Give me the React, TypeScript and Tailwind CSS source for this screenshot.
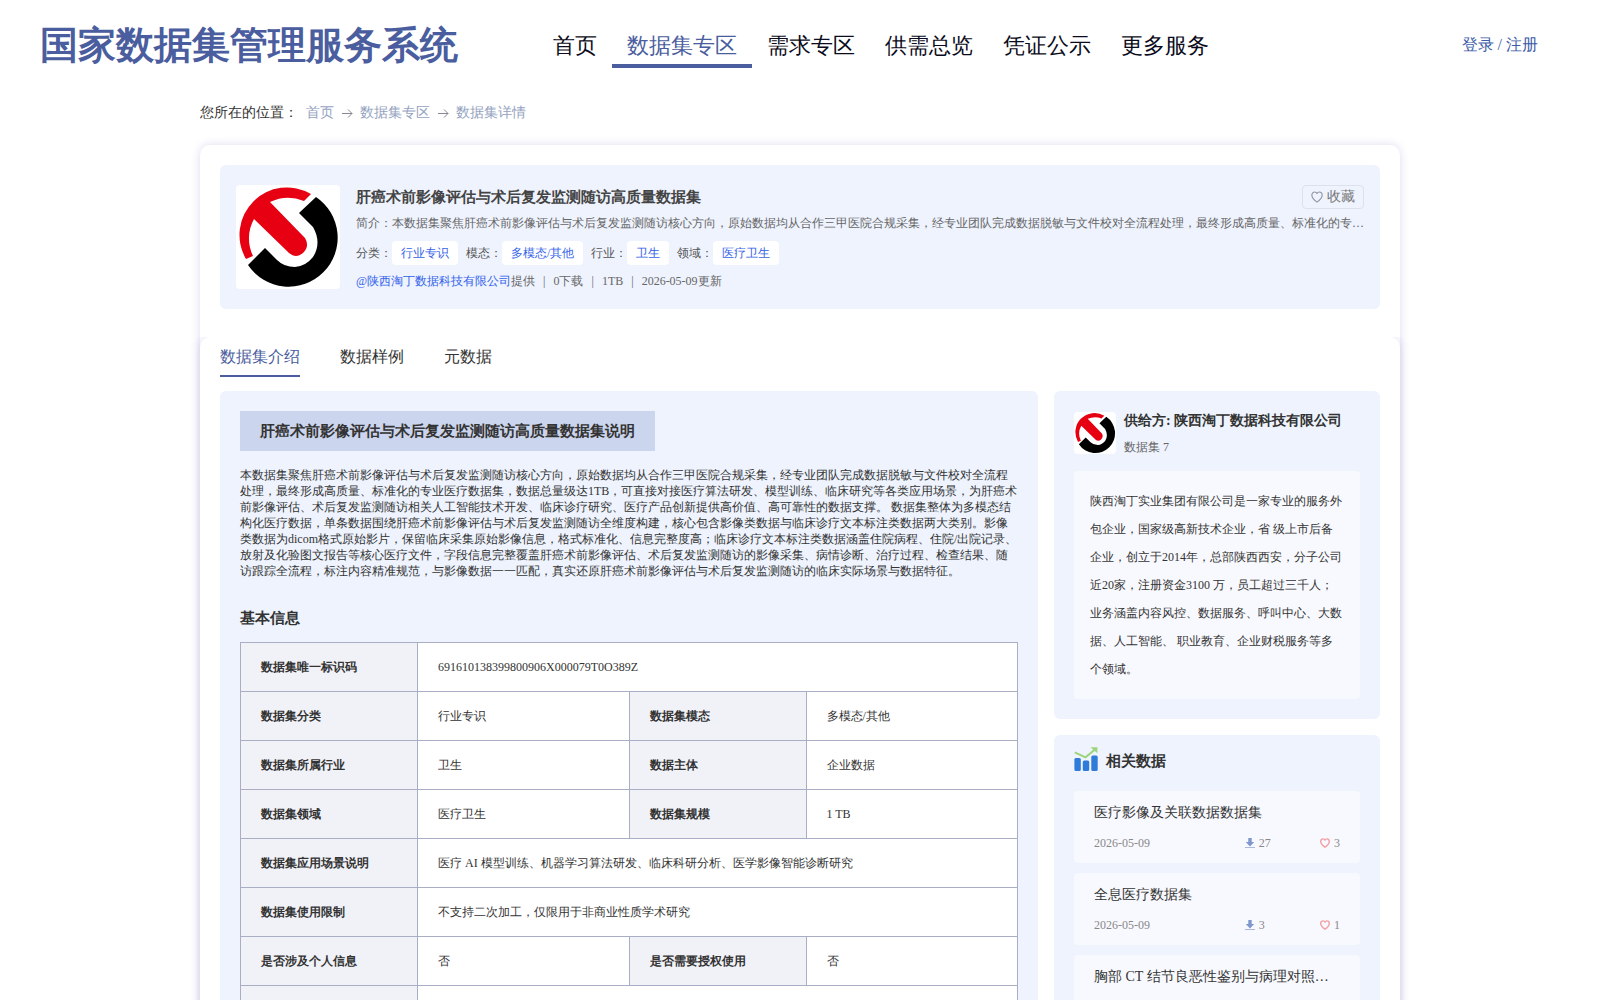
import { ReactNode } from 'react';

interface InfoRow {
  cells: { label: string; value: string }[];
}

interface RelatedItem {
  title: string;
  date: string;
  downloads: number;
  likes: number;
}

const navItems = ['首页', '数据集专区', '需求专区', '供需总览', '凭证公示', '更多服务'];

const crumbs = ['首页', '数据集专区', '数据集详情'];

const tags = [
  { label: '分类', value: '行业专识' },
  { label: '模态', value: '多模态/其他' },
  { label: '行业', value: '卫生' },
  { label: '领域', value: '医疗卫生' },
];

const tabs = ['数据集介绍', '数据样例', '元数据'];

const description =
  '本数据集聚焦肝癌术前影像评估与术后复发监测随访核心方向，原始数据均从合作三甲医院合规采集，经专业团队完成数据脱敏与文件校对全流程处理，最终形成高质量、标准化的专业医疗数据集，数据总量级达1TB，可直接对接医疗算法研发、模型训练、临床研究等各类应用场景，为肝癌术前影像评估、术后复发监测随访相关人工智能技术开发、临床诊疗研究、医疗产品创新提供高价值、高可靠性的数据支撑。 数据集整体为多模态结构化医疗数据，单条数据围绕肝癌术前影像评估与术后复发监测随访全维度构建，核心包含影像类数据与临床诊疗文本标注类数据两大类别。影像类数据为dicom格式原始影片，保留临床采集原始影像信息，格式标准化、信息完整度高；临床诊疗文本标注类数据涵盖住院病程、住院/出院记录、放射及化验图文报告等核心医疗文件，字段信息完整覆盖肝癌术前影像评估、术后复发监测随访的影像采集、病情诊断、治疗过程、检查结果、随访跟踪全流程，标注内容精准规范，与影像数据一一匹配，真实还原肝癌术前影像评估与术后复发监测随访的临床实际场景与数据特征。';

const supplierIntro =
  '陕西淘丁实业集团有限公司是一家专业的服务外包企业，国家级高新技术企业，省 级上市后备企业，创立于2014年，总部陕西西安，分子公司近20家，注册资金3100 万，员工超过三千人；业务涵盖内容风控、数据服务、呼叫中心、大数据、人工智能、 职业教育、企业财税服务等多个领域。';

const infoRows: InfoRow[] = [
  { cells: [{ label: '数据集唯一标识码', value: '691610138399800906X000079T0O389Z' }] },
  { cells: [{ label: '数据集分类', value: '行业专识' }, { label: '数据集模态', value: '多模态/其他' }] },
  { cells: [{ label: '数据集所属行业', value: '卫生' }, { label: '数据主体', value: '企业数据' }] },
  { cells: [{ label: '数据集领域', value: '医疗卫生' }, { label: '数据集规模', value: '1 TB' }] },
  { cells: [{ label: '数据集应用场景说明', value: '医疗 AI 模型训练、机器学习算法研发、临床科研分析、医学影像智能诊断研究' }] },
  { cells: [{ label: '数据集使用限制', value: '不支持二次加工，仅限用于非商业性质学术研究' }] },
  { cells: [{ label: '是否涉及个人信息', value: '否' }, { label: '是否需要授权使用', value: '否' }] },
  { cells: [{ label: '数据集提供方', value: '陕西淘丁数据科技有限公司' }] },
];

const related: RelatedItem[] = [
  { title: '医疗影像及关联数据数据集', date: '2026-05-09', downloads: 27, likes: 3 },
  { title: '全息医疗数据集', date: '2026-05-09', downloads: 3, likes: 1 },
  { title: '胸部 CT 结节良恶性鉴别与病理对照数据集', date: '2026-05-09', downloads: 2, likes: 1 },
];

function CompanyLogo({ className }: { className: string }) {
  return (
    <svg viewBox="0 0 104 104" className={className} role="img" aria-label="陕西淘丁">
      <rect width="104" height="104" fill="#fff" />
      <path
        d="M75 9 A47.5 47.5 0 0 0 10 74 L17 71 A40 40 0 0 1 18 34 L53 68 Q60 74 67 68 Q74 61 69 53 L34 17 A42 42 0 0 1 68 16 Z"
        fill="#e60012"
      />
      <path
        d="M80 12 A49 49 0 1 1 12 80 L29 63 L41 75 Q48 82 59 82 Q70 81 77 72 Q86 58 77 42 L63 28 Z"
        fill="#000"
      />
    </svg>
  );
}

function HeartIcon({ className, strokeWidth = 1.3 }: { className: string; strokeWidth?: number }) {
  return (
    <svg viewBox="0 0 14 14" className={className} fill="none" stroke="currentColor" aria-hidden="true">
      <path
        d="M7 13 C4.4 11.1 1 8.6 1 4.9 C1 2.7 2.6 1.2 4.3 1.2 C5.5 1.2 6.5 1.9 7 2.9 C7.5 1.9 8.5 1.2 9.7 1.2 C11.4 1.2 13 2.7 13 4.9 C13 8.6 9.6 11.1 7 13 Z"
        strokeWidth={strokeWidth}
        strokeLinejoin="round"
      />
    </svg>
  );
}

function ArrowIcon() {
  return (
    <svg viewBox="0 0 14 14" className="mx-1.5 size-3.5 text-[#85888f]" fill="none" stroke="currentColor" aria-hidden="true">
      <path d="M2 7.5 H12 M8 3.5 L12 7.5 L8 11.5" />
    </svg>
  );
}

function DownloadIcon() {
  return (
    <svg viewBox="0 0 10 10" className="size-2.5" aria-hidden="true">
      <path d="M3.3 0 H6.7 V4 H9.2 L5 8.4 L0.8 4 H3.3 Z" fill="#7f97cc" />
      <rect y="9" width="10" height="1" fill="#a9b8dc" />
    </svg>
  );
}

function ChartIcon() {
  return (
    <svg viewBox="0 0 24 24" className="size-6" aria-hidden="true">
      <rect x="0.4" y="11" width="6.4" height="13" rx="1.5" fill="#2f7bd9" />
      <rect x="8.8" y="13.5" width="6.4" height="10.5" rx="1.5" fill="#2f7bd9" />
      <rect x="17.3" y="8.5" width="6.4" height="15.5" rx="1.5" fill="#2f7bd9" />
      <path d="M0.8 5.3 L11.5 10.3 L21 2.5" fill="none" stroke="#9bd47c" strokeWidth="2" />
      <path d="M16.5 0.3 H23.4 V6.2 Z" fill="#9bd47c" />
    </svg>
  );
}

function Panel({ className = '', children }: { className?: string; children: ReactNode }) {
  return <section className={`rounded-md bg-[#eef3fe] px-5 ${className}`}>{children}</section>;
}

export default function App() {
  return (
    <div className="min-h-screen bg-white font-['Liberation_Serif',serif] text-xs text-[#333]">
      <header className="flex h-[90px] items-center pl-10 pr-[62px] text-[#4a5d9e]">
        <h1 className="text-[38px] leading-none font-bold whitespace-nowrap">国家数据集管理服务系统</h1>
        <nav className="mt-1.5 ml-20 flex text-[22px] whitespace-nowrap">
          {navItems.map((item, i) => (
            <a
              key={item}
              href="#"
              className={
                i === 1
                  ? 'border-b-4 border-[#4a5d9e] px-[15px] leading-9'
                  : 'border-b-4 border-transparent px-[15px] leading-9 text-[#0b0b20]'
              }
            >
              {item}
            </a>
          ))}
        </nav>
        <a href="#" className="ml-auto text-base whitespace-nowrap text-[#3d5ca8]">登录 / 注册</a>
      </header>

      <main className="mx-auto max-w-[1200px]">
        <div className="flex h-[55px] items-center pb-2.5 text-sm">
          <span className="mr-2">您所在的位置：</span>
          {crumbs.map((crumb, i) => (
            <span key={crumb} className="flex items-center">
              {i > 0 && <ArrowIcon />}
              <a href="#" className="text-[#94a3bf]">{crumb}</a>
            </span>
          ))}
        </div>

        <div className="rounded-[10px] shadow-[0_0_10px_rgba(80,80,180,0.2)]">
          <div className="p-5">
            <section className="flex gap-4 rounded-md bg-[#eef3fe] px-4 py-5">
              <CompanyLogo className="size-26 shrink-0 rounded" />
              <div className="min-w-0 flex-1">
                <div className="flex h-6 items-center justify-between">
                  <h2 className="pt-0.5 text-[15px] font-bold text-[#444]">肝癌术前影像评估与术后复发监测随访高质量数据集</h2>
                  <button className="flex h-6 items-center gap-1 rounded border border-[#dde1ec] px-2 text-sm text-[#777]">
                    <HeartIcon className="size-3 text-[#8f949e]" />
                    收藏
                  </button>
                </div>
                <p className="mt-1 truncate leading-5 text-[#666]">简介：{description}</p>
                <div className="mt-2 flex h-6 items-center gap-2 text-[#555]">
                  {tags.map(tag => (
                    <div key={tag.label} className="flex items-center">
                      {tag.label}：
                      <span className="rounded bg-white px-[9px] leading-6 text-[#3563e9]">{tag.value}</span>
                    </div>
                  ))}
                </div>
                <div className="mt-2 flex gap-2 leading-4 text-[#666]">
                  <span>
                    <a href="#" className="text-[#3563e9]">@陕西淘丁数据科技有限公司</a>提供
                  </span>
                  <span>|</span>
                  <span>0下载</span>
                  <span>|</span>
                  <span>1TB</span>
                  <span>|</span>
                  <span>2026-05-09更新</span>
                </div>
              </div>
            </section>
          </div>

          <div className="mt-2 rounded-[10px] px-5 pt-1 pb-5 shadow-[0_0_10px_rgba(80,80,180,0.2)] [clip-path:inset(0_-12px_-12px_-12px)]">
            <div role="tablist" className="flex gap-10 text-base">
              {tabs.map((tab, i) => (
                <button
                  key={tab}
                  role="tab"
                  aria-selected={i === 0}
                  className={
                    i === 0
                      ? 'border-b-2 border-[#4a5d9e] pt-1 pb-1.5 text-[#4a5d9e]'
                      : 'border-b-2 border-transparent pt-1 pb-1.5'
                  }
                >
                  {tab}
                </button>
              ))}
            </div>

            <div className="mt-3.5 flex items-start gap-4">
              <Panel className="min-w-0 flex-1 py-5">
                <h3 className="w-fit bg-[#cbd5ed] px-5 text-[15px] leading-10 font-bold">
                  肝癌术前影像评估与术后复发监测随访高质量数据集说明
                </h3>
                <p className="mt-4 leading-4">{description}</p>
                <h3 className="mt-7 text-[15px] leading-[22px] font-bold">基本信息</h3>
                <table className="mt-[13px] w-full table-fixed border-collapse bg-white text-left">
                  <colgroup>
                    <col className="w-[177px]" />
                    <col />
                    <col className="w-[177px]" />
                    <col />
                  </colgroup>
                  <tbody>
                    {infoRows.map(row => (
                      <tr key={row.cells[0].label} className="h-[49px]">
                        {row.cells.map(cell => [
                          <th key={cell.label} scope="row" className="border border-[#a9aec4] bg-[#f1f2f8] px-5 font-bold">
                            {cell.label}
                          </th>,
                          <td key={cell.label + '-value'} colSpan={row.cells.length === 1 ? 3 : 1} className="border border-[#a9aec4] px-5">
                            {cell.value}
                          </td>,
                        ])}
                      </tr>
                    ))}
                  </tbody>
                </table>
              </Panel>

              <aside className="flex w-[326px] shrink-0 flex-col gap-4">
                <Panel className="py-5">
                  <div className="flex items-center gap-2">
                    <CompanyLogo className="size-[42px] shrink-0 rounded" />
                    <div>
                      <h3 className="text-sm leading-5 font-bold">供给方: 陕西淘丁数据科技有限公司</h3>
                      <p className="mt-2 leading-4 text-[#666]">数据集 7</p>
                    </div>
                  </div>
                  <p className="mt-4 rounded bg-[#f8f9fe] p-4 leading-7">{supplierIntro}</p>
                </Panel>

                <Panel className="pt-3 pb-5">
                  <div className="flex gap-2">
                    <ChartIcon />
                    <h3 className="pt-0.5 text-[15px] leading-6 font-bold">相关数据</h3>
                  </div>
                  <ul className="mt-[18px] space-y-2.5">
                    {related.map(item => (
                      <li key={item.title} className="rounded bg-[#f8f9fe] px-5 pt-2.5 pb-3">
                        <a href="#" className="block truncate text-sm leading-6">{item.title}</a>
                        <div className="mt-2.5 grid grid-cols-[2fr_1fr_auto] leading-4 text-[#888]">
                          <span>{item.date}</span>
                          <span className="flex items-center gap-1"><DownloadIcon />{item.downloads}</span>
                          <span className="flex items-center gap-1">
                            <HeartIcon className="size-2.5 text-[#f2a0a4]" strokeWidth={2} />
                            {item.likes}
                          </span>
                        </div>
                      </li>
                    ))}
                  </ul>
                </Panel>
              </aside>
            </div>
          </div>
        </div>
      </main>
    </div>
  );
}
